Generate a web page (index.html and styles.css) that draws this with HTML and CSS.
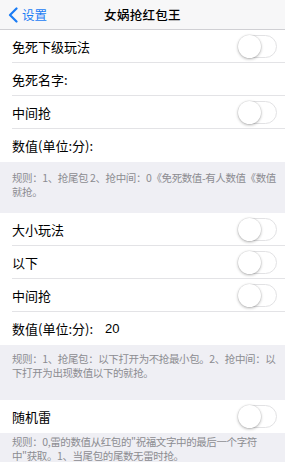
FILE: index.html
```html
<!DOCTYPE html>
<html lang="zh">
<head>
    <meta charset="UTF-8">
    <title>女娲抢红包王</title>
    <link rel="stylesheet" href="styles.css">
</head>
<body>

    <div class="navbar">
        <a class="back">
            <svg class="chevron" width="10" height="16" viewBox="0 0 10 16"><path d="M8.5 1.5 L2 8 L8.5 14.5" fill="none" stroke="#1a7cf5" stroke-width="2.2" stroke-linecap="round" stroke-linejoin="round"/></svg>
            <span>设置</span>
        </a>
        <div class="title">女娲抢红包王</div>
    </div>

    <div class="section">
        <div class="row"><span class="label">免死下级玩法</span><span class="switch"></span></div>
        <div class="row"><span class="label">免死名字:</span></div>
        <div class="row"><span class="label">中间抢</span><span class="switch"></span></div>
        <div class="row"><span class="label">数值(单位:分):</span></div>
    </div>
    <div class="footer footer-first">规则：1、抢尾包 2、抢中间：0《免死数值-有人数值《数值就抢。</div>

    <div class="section">
        <div class="row"><span class="label">大小玩法</span><span class="switch"></span></div>
        <div class="row"><span class="label">以下</span><span class="switch"></span></div>
        <div class="row"><span class="label">中间抢</span><span class="switch"></span></div>
        <div class="row"><span class="label">数值(单位:分):</span><span class="value">20</span></div>
    </div>
    <div class="footer">规则：1、抢尾包：以下打开为不抢最小包。2、抢中间：以下打开为出现数值以下的就抢。</div>

    <div class="section">
        <div class="row"><span class="label">随机雷</span><span class="switch"></span></div>
    </div>
    <div class="footer footer-last">规则：0,雷的数值从红包的"祝福文字中的最后一个字符中"获取。1、当尾包的尾数无雷时抢。</div>

</body>
</html>
```

FILE: styles.css
```css
body {
    margin: 0;
    background-color: #efeff4;
    font-family: "Noto Sans CJK SC", "Liberation Sans", sans-serif;
    color: #000;
}

.navbar {
    height: 29px;
    background-color: #f7f7f8;
    border-bottom: 1px solid #d0d0d4;
    display: flex;
    align-items: center;
    justify-content: center;
    position: relative;
}
.back {
    position: absolute; /* sits over the bar, left side */
    left: 8px;
    top: 0;
    height: 29px;
    display: flex;
    align-items: center;
    gap: 4px;
    color: #1a7cf5;
    font-size: 12.5px;
}
.title {
    font-size: 12.5px;
    font-weight: 500;
    letter-spacing: 0.3px;
}

.section {
    background-color: #fff;
}
.row {
    height: 33px;
    margin-left: 12px;
    padding-right: 8px;
    display: flex;
    align-items: center;
    border-bottom: 1px solid #e3e3e6;
    box-sizing: border-box;
}
.row:last-child {
    border-bottom: none;
}
.label {
    font-size: 13px;
    flex: none;
}
.value {
    font-size: 13px;
    margin-left: 12px;
    font-family: "Liberation Sans", sans-serif;
}
.switch {
    margin-left: auto;
    width: 39px;
    height: 23px;
    box-sizing: border-box;
    border: 1px solid #e2e2e4;
    border-radius: 12px;
    background-color: #fff;
    position: relative;
}
.switch::after {
    content: "";
    position: absolute;
    left: -1px;
    top: -1px;
    width: 23px;
    height: 23px;
    border-radius: 50%;
    background-color: #fff;
    box-shadow: 0 1px 3px rgba(0, 0, 0, 0.3), 0 0 0 0.5px rgba(0, 0, 0, 0.08);
}

.footer {
    font-size: 10.5px;
    line-height: 14px;
    letter-spacing: -0.4px;
    color: #8c8c91;
    padding: 7px 3px 20px 12px;
}
.footer-first {
    padding-top: 9px;
    padding-bottom: 14px;
}
.footer-last {
    padding-top: 2px;
    padding-right: 24px;
    padding-bottom: 0;
}
```
